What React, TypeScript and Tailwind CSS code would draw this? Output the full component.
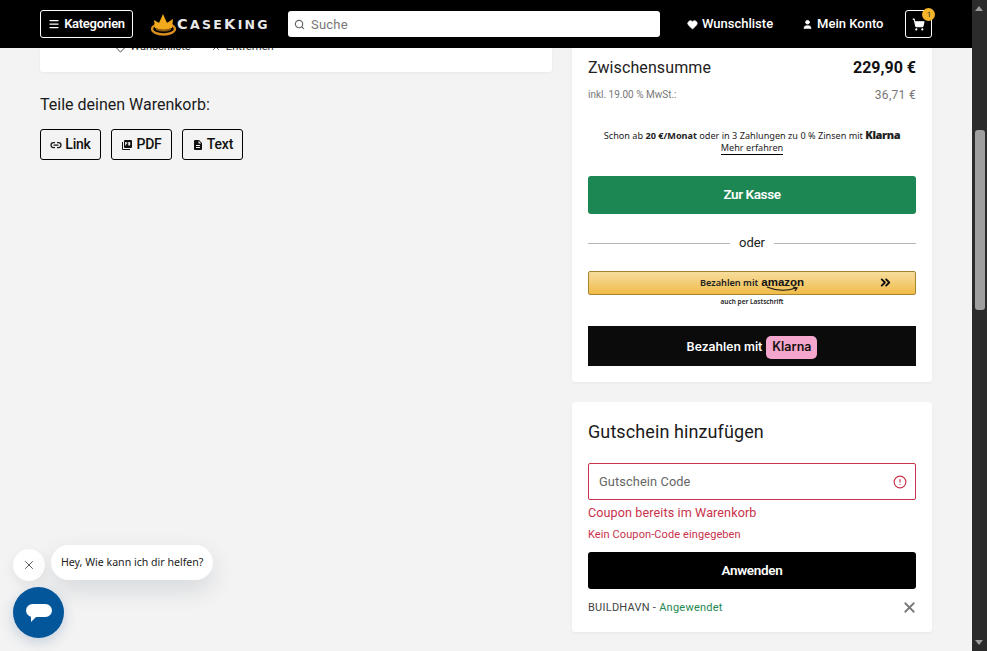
import { Menu, Search, Heart, User, ShoppingCart, Link2, X, ChevronsRight, AlertCircle } from "lucide-react";

function Crown() {
  return (
    <svg width="25" height="23" viewBox="0 0 25 23" className="shrink-0">
      <ellipse cx="12.5" cy="16" rx="11.5" ry="5.5" fill="none" stroke="#d98e1f" strokeWidth="2.4" />
      <path d="M4 15 L3 7 L8 10 L12 1 L16 10 L22 6 L21 15 Q12.5 19 4 15Z" fill="#f2a91c" />
      <path d="M5 15 Q12.5 18 20 15 L20 17 Q12.5 20 5 17Z" fill="#8a5a12" />
    </svg>
  );
}

function PdfIcon() {
  return (
    <svg width="12" height="12" viewBox="0 0 24 24" fill="#111">
      <path d="M20 2H8a2 2 0 0 0-2 2v12a2 2 0 0 0 2 2h12a2 2 0 0 0 2-2V4a2 2 0 0 0-2-2zM9.5 9H11V7H9.5v2zm0 1.5V13H8V6h3a1.5 1.5 0 0 1 1.5 1.5V9A1.5 1.5 0 0 1 11 10.5H9.5zm5-4.5h2.5a1.5 1.5 0 0 1 1.5 1.5v4A1.5 1.5 0 0 1 17 13h-2.5V6z" fillRule="evenodd" />
      <path d="M2 6h2v14h14v2H4a2 2 0 0 1-2-2V6z" />
    </svg>
  );
}

function DocIcon() {
  return (
    <svg width="12" height="12" viewBox="0 0 24 24" fill="#111">
      <path d="M14 2H6a2 2 0 0 0-2 2v16a2 2 0 0 0 2 2h12a2 2 0 0 0 2-2V8l-6-6zm2 16H8v-2h8v2zm0-4H8v-2h8v2zm-3-5V3.5L18.5 9H13z" />
    </svg>
  );
}

function ShareButton({ icon, label }: { icon: React.ReactNode; label: string }) {
  return (
    <button className="flex h-[31px] w-[61px] items-center justify-center gap-[3px] rounded-[3px] border border-black text-[14px] font-medium tracking-[-0.2px] text-[#111]">
      {icon}
      <span>{label}</span>
    </button>
  );
}

export default function App() {
  return (
    <div className="flex h-[651px] w-[987px] overflow-hidden bg-[#f3f3f3] font-['Roboto',sans-serif] text-[#111]">
      <div className="relative flex w-[972px] flex-col">
        <header className="z-10 flex h-12 shrink-0 items-center bg-black pl-10 pr-10 text-white">
          <button className="flex h-[28px] w-[93px] shrink-0 items-center justify-center gap-[4px] rounded-[3px] border border-white text-[13px] font-semibold tracking-[-0.3px]">
            <Menu size={12} strokeWidth={2.5} />
            Kategorien
          </button>
          <div className="ml-[18px] flex w-[119px] shrink-0 items-center">
            <Crown />
            <span className="ml-[1px] whitespace-nowrap font-['DejaVu_Sans',sans-serif] text-[14.5px] font-bold leading-[14px] tracking-[2.3px] text-[#e8e8e8]">
              C<span className="text-[12.5px]">ASE</span>K<span className="text-[12.5px]">ING</span>
            </span>
          </div>
          <div className="ml-[18px] flex h-[26px] w-[372px] shrink-0 items-center gap-[6px] rounded-[3px] bg-white px-[6px] text-[13px] text-[#777]">
            <Search size={11} strokeWidth={2.5} className="text-[#666]" />
            <span className="pt-[1px] tracking-[0.2px]">Suche</span>
          </div>
          <div className="ml-[27px] flex shrink-0 items-center gap-[4px] whitespace-nowrap text-[13px] font-medium">
            <Heart size={11} fill="white" strokeWidth={2} />
            Wunschliste
          </div>
          <div className="ml-[29px] flex shrink-0 items-center gap-[4px] whitespace-nowrap text-[13px] font-medium">
            <User size={11} fill="white" strokeWidth={2} />
            Mein Konto
          </div>
          <div className="relative ml-[22px] flex h-[28px] w-[27px] shrink-0 items-center justify-center rounded-[3px] border border-white">
            <ShoppingCart size={13} fill="white" strokeWidth={2} />
            <span className="absolute -right-[4px] -top-[3px] flex h-[13px] w-[13px] items-center justify-center rounded-full bg-[#f5b42a] text-[8px] text-[#333]">1</span>
          </div>
        </header>

        <main className="flex flex-1 gap-5 pl-10 pr-10">
          <div className="w-[512px]">
            <div className="h-[24px] overflow-hidden rounded-b-[3px] bg-white shadow-[0_1px_3px_rgba(0,0,0,0.05)]">
              <div className="-mt-[9px] ml-[75px] flex items-center gap-[20px] text-[11.2px] text-[#333]">
                <span className="flex items-center gap-[4px]"><Heart size={11} />Wunschliste</span>
                <span className="flex items-center gap-[5px]"><X size={10} />Entfernen</span>
              </div>
            </div>
            <p className="mt-[22px] text-[16px] leading-[22px] text-[#1a1a1a]">Teile deinen Warenkorb:</p>
            <div className="mt-[13px] flex gap-[10px]">
              <ShareButton icon={<Link2 size={12} strokeWidth={2.5} />} label="Link" />
              <ShareButton icon={<PdfIcon />} label="PDF" />
              <ShareButton icon={<DocIcon />} label="Text" />
            </div>
          </div>

          <div className="flex w-[360px] flex-col gap-5">
            <section className="h-[334px] rounded-b-[3px] bg-white px-4 shadow-[0_1px_3px_rgba(0,0,0,0.05)]">
              <div className="mt-[9px] flex items-center justify-between">
                <span className="text-[16px] leading-[22px] tracking-[0.1px] text-[#222]">Zwischensumme</span>
                <span className="text-[16px] font-bold leading-[22px]">229,90 €</span>
              </div>
              <div className="mt-[8px] flex items-center justify-between text-[#777]">
                <span className="text-[10px] leading-4">inkl. 19.00 % MwSt.:</span>
                <span className="text-[12px] leading-4 tracking-[0.3px]">36,71 €</span>
              </div>
              <p className="mt-[26px] text-center font-['Noto_Sans',sans-serif] text-[9.15px] leading-[12px] text-[#222]">
                Schon ab <b>20 €/Monat</b> oder in 3 Zahlungen zu 0 % Zinsen mit <span className="text-[11px] font-black tracking-[-0.4px]">Klarna</span>
                <br />
                <span className="border-b border-black">Mehr erfahren</span>
              </p>
              <button className="mt-[22px] h-[38px] w-full rounded-[3px] bg-[#1c8752] pb-[2px] text-[13.5px] font-semibold tracking-[-0.4px] text-white">Zur Kasse</button>
              <div className="mt-[19px] flex items-center gap-[9px] text-[13px] leading-[20px] text-[#222]">
                <div className="h-px flex-1 bg-[#b5b5b5]" />
                <span>oder</span>
                <div className="h-px flex-1 bg-[#b5b5b5]" />
              </div>
              <button className="relative mt-[18px] flex h-[24px] w-full items-center justify-center gap-[3px] rounded-[2px] border border-[#a5852f] bg-gradient-to-b from-[#f7dd9b] to-[#efbb45] font-['Noto_Sans',sans-serif] text-[9.2px] font-semibold text-[#222]">
                <span>Bezahlen mit</span>
                <span className="relative -mt-[3px] font-['Liberation_Sans',sans-serif] text-[11.5px] font-bold leading-[12px] text-[#111]">
                  amazon
                  <svg className="absolute -bottom-[4px] left-[5px]" width="34" height="6" viewBox="0 0 34 6"><path d="M1 1 Q15 7 30 2 M27 1 L31 2 L29 5" fill="none" stroke="#111" strokeWidth="1.2" /></svg>
                </span>
                <ChevronsRight size={15} strokeWidth={3} className="absolute right-[22px] top-[3px] text-[#111]" />
              </button>
              <p className="mt-[2px] text-center font-['Noto_Sans',sans-serif] text-[6.5px] font-semibold leading-[10px] text-[#222]">auch per Lastschrift</p>
              <button className="mt-[19px] flex h-[40px] w-full items-center justify-center gap-[4px] bg-[#0b0b0c] pt-[2px] font-['Inter',sans-serif] text-[12.2px] font-semibold text-white">
                Bezahlen mit
                <span className="flex h-[23px] w-[51px] items-center justify-center rounded-[5px] bg-[#f4a6cd] text-[12.5px] font-semibold text-[#17120f]">Klarna</span>
              </button>
            </section>

            <section className="h-[230px] rounded-[3px] bg-white px-4 shadow-[0_1px_3px_rgba(0,0,0,0.05)]">
              <h2 className="mt-[18px] text-[18px] leading-[24px] tracking-[0.1px] text-[#1a1a1a]">Gutschein hinzufügen</h2>
              <div className="mt-[19px] flex h-[37px] items-center justify-between rounded-[2px] border border-[#c8324b] pl-[10px] pr-[8px] text-[12.8px] tracking-[0.1px] text-[#666]">
                Gutschein Code
                <AlertCircle size={14} strokeWidth={2} className="text-[#c8324b]" />
              </div>
              <p className="mt-[4px] text-[12.6px] leading-[18px] tracking-[0.1px] text-[#c8324b]">Coupon bereits im Warenkorb</p>
              <p className="mt-[5px] text-[11px] leading-[16px] tracking-[0.1px] text-[#c8324b]">Kein Coupon-Code eingegeben</p>
              <button className="mt-[9px] h-[37px] w-full rounded-[3px] bg-black text-[13.5px] font-semibold tracking-[-0.3px] text-white">Anwenden</button>
              <div className="mt-[9px] flex items-center justify-between text-[11px] leading-[18px] tracking-[0.25px] text-[#444]">
                <span className="pt-[1px]">BUILDHAVN - <span className="text-[#1c8752]">Angewendet</span></span>
                <X size={17} strokeWidth={2.5} className="mr-[-2px] text-[#777]" />
              </div>
            </section>
          </div>
        </main>

        <div className="absolute left-[13px] top-[545px] flex items-start gap-[6px]">
          <div className="mt-[4px] flex h-[32px] w-[32px] items-center justify-center rounded-full bg-white shadow-[0_4px_12px_rgba(0,0,0,0.08)]">
            <X size={14} strokeWidth={1.5} className="text-[#444]" />
          </div>
          <div className="flex h-[35px] items-center rounded-[18px] bg-white px-[10px] font-['Noto_Sans',sans-serif] text-[10.6px] text-[#222] shadow-[0_10px_24px_rgba(0,30,60,0.12)]">
            Hey, Wie kann ich dir helfen?
          </div>
        </div>
        <div className="absolute left-[13px] top-[587px] flex h-[51px] w-[51px] items-center justify-center rounded-full bg-[#04569b] shadow-[0_4px_14px_rgba(0,60,120,0.2)]">
          <svg width="26" height="20" viewBox="0 0 26 20">
            <rect x="0" y="1" width="26" height="13" rx="6.5" fill="white" />
            <path d="M5 13 L5 19 L11 13Z" fill="white" />
          </svg>
        </div>
      </div>

      <aside className="relative w-[15px] bg-[#2b2b2b]">
        <div className="absolute left-[3px] top-[6px] h-0 w-0 border-x-[4.5px] border-b-[5px] border-x-transparent border-b-[#9b9b9b]" />
        <div className="absolute left-[3px] top-[130px] h-[180px] w-[10px] rounded-[3px] bg-[#9f9f9f]" />
        <div className="absolute bottom-[6px] left-[3px] h-0 w-0 border-x-[4.5px] border-t-[5px] border-x-transparent border-t-[#9b9b9b]" />
      </aside>
    </div>
  );
}
